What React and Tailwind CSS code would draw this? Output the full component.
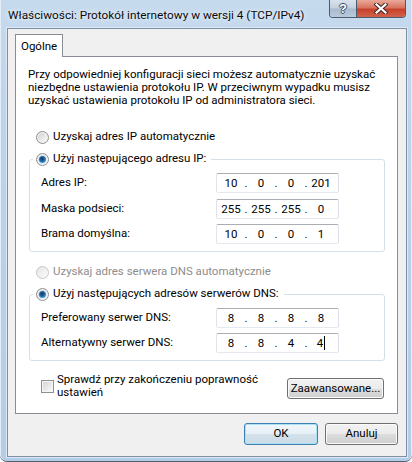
import React, { Fragment } from "react";

function Radio({ checked, disabled }) {
  if (disabled) {
    return (
      <span className="inline-flex h-[13px] w-[13px] shrink-0 items-center justify-center rounded-full border border-[#c6c6c6] bg-[linear-gradient(135deg,#e6e6e6,#fbfbfb)]" />
    );
  }
  return (
    <span className="inline-flex h-[13px] w-[13px] shrink-0 items-center justify-center rounded-full border border-[#8f8f8f] bg-[linear-gradient(135deg,#cfcfcf,#fdfdfd)] shadow-[inset_0_0_0_1px_#f4f4f4]">
      {checked && (
        <span className="h-[7px] w-[7px] rounded-full bg-[radial-gradient(circle_at_45%_40%,#0e3a66_0%,#1b5c9a_35%,#3d9ad8_70%,#a4dcf7_100%)]" />
      )}
    </span>
  );
}

function IPBox({ parts, cursor }) {
  return (
    <div className="flex h-[20px] w-[123px] items-center rounded-[2px] border border-[#e3e9ef] border-t-[#abadb3] border-l-[#e2e3ea] border-r-[#dbdfe6] bg-white pl-[2px] leading-[18px] text-black">
      {parts.map((p, i) => (
        <Fragment key={i}>
          {i > 0 && <span className="w-[6px] text-center">.</span>}
          <span className="flex w-[24px] items-center justify-center">
            {p}
            {cursor && i === parts.length - 1 && (
              <span className="ml-[1px] h-[14px] w-[1px] bg-black" />
            )}
          </span>
        </Fragment>
      ))}
    </div>
  );
}

function Field({ label, parts, cursor }) {
  return (
    <div className="flex items-center">
      <span className="w-[186px] pl-[11px]">{label}</span>
      <IPBox parts={parts} cursor={cursor} />
    </div>
  );
}

function WinButton({ children, className = "", primary }) {
  return (
    <div
      className={
        "flex items-center justify-center rounded-[3px] border leading-none " +
        (primary
          ? "border-[#3c7fb1] bg-[linear-gradient(#f2f8fc,#e5eff6_50%,#d3e1eb_50%,#cbdbe6)] shadow-[inset_0_0_0_1px_#aee0f8] "
          : "border-[#707070] bg-[linear-gradient(#f2f2f2,#ebebeb_50%,#dddddd_50%,#cfcfcf)] shadow-[inset_0_0_0_1px_#fbfbfb] ") +
        className
      }
    >
      {children}
    </div>
  );
}

function GroupHeader({ children }) {
  return (
    <div className="-mt-[9px] ml-[3px] flex h-[16px] w-fit items-center gap-[4px] bg-white pl-[3px] pr-[5px]">
      <Radio checked />
      <span>{children}</span>
    </div>
  );
}

export default function App() {
  return (
    <div className="flex h-[462px] w-[412px] flex-col overflow-hidden rounded-b-[7px] border-b border-[#51606f] bg-[linear-gradient(180deg,#c6daee,#bdd3ea_30%,#b4cde7_100%)] pb-[4px] pl-[7px] pr-[5px] font-['Roboto',sans-serif] text-[11.5px] text-black shadow-[inset_1px_0_#e4edf7,inset_-1px_0_#e4edf7]">
      {/* Title bar */}
      <div className="flex h-[28px] shrink-0 items-start justify-between">
        <div className="ml-[1px] mt-[6px] h-[18px] whitespace-nowrap text-[11.8px] leading-[18px] text-[#0b0b0b] [text-shadow:0_0_6px_#eaf2fb,0_0_3px_#eaf2fb]">
          Właściwości: Protokół internetowy w wersji 4 (TCP/IPv4)
        </div>
        <div className="mr-[1px] flex h-[18px] overflow-hidden rounded-b-[4px] border border-t-0 border-[#4b5a6c] shadow-[inset_0_0_0_1px_rgba(255,255,255,0.5)]">
          <div className="flex w-[27px] items-center justify-center border-r border-[#4b5a6c] bg-[linear-gradient(#d9e3ee,#c3d1e0_45%,#a9bbcf_55%,#b9cadb)] font-['Liberation_Sans',sans-serif] text-[13px] font-bold leading-none text-white [text-shadow:1px_0_#3d4a5a,-1px_0_#3d4a5a,0_1px_#3d4a5a,0_-1px_#3d4a5a]">
            ?
          </div>
          <div className="flex w-[48px] items-center justify-center bg-[linear-gradient(#e9a99b,#d9735f_45%,#c6412b_55%,#d4614a)]">
            <svg width="14" height="11" viewBox="0 0 14 11">
              <path d="M2.5 1.5 L11.5 9.5 M11.5 1.5 L2.5 9.5" stroke="#3e2a27" strokeWidth="4.2" strokeLinecap="square" />
              <path d="M2.5 1.5 L11.5 9.5 M11.5 1.5 L2.5 9.5" stroke="#ffffff" strokeWidth="2.2" strokeLinecap="square" />
            </svg>
          </div>
        </div>
      </div>

      {/* Client area */}
      <div className="flex min-h-0 flex-1 flex-col border border-[#7d8fa4] bg-[#f0f0f0] px-[7px] pt-[5px] shadow-[0_0_0_1px_#dde8f4]">
        {/* Tab header */}
        <div className="relative z-10 -mb-[1px] flex h-[23px] w-[48px] items-start border border-b-0 border-[#898c95] bg-white pl-[5px] pt-[1px] leading-[20px]">
          Ogólne
        </div>
        {/* Tab page */}
        <div className="flex h-[358px] w-[383px] flex-col border border-[#898c95] bg-white">
          <p className="whitespace-nowrap pl-[12px] pt-[11px] leading-[13px]">
            Przy odpowiedniej konfiguracji sieci możesz automatycznie uzyskać
            <br />
            niezbędne ustawienia protokołu IP. W przeciwnym wypadku musisz
            <br />
            uzyskać ustawienia protokołu IP od administratora sieci.
          </p>

          <div className="ml-[20px] mt-[22px] flex h-[16px] items-center gap-[4px]">
            <Radio />
            <span>Uzyskaj adres IP automatycznie</span>
          </div>

          <div className="ml-[13px] mt-[14px] flex w-[356px] flex-col rounded-[3px] border border-[#d5dfe5] pb-[7px]">
            <GroupHeader>Użyj następującego adresu IP:</GroupHeader>
            <div className="mt-[6px] flex flex-col gap-[5.5px]">
              <Field label="Adres IP:" parts={["10", "0", "0", "201"]} />
              <Field label="Maska podsieci:" parts={["255", "255", "255", "0"]} />
              <Field label="Brama domyślna:" parts={["10", "0", "0", "1"]} />
            </div>
          </div>

          <div className="ml-[20px] mt-[12px] flex h-[16px] items-center gap-[4px] text-[#8d8d8d]">
            <Radio disabled />
            <span>Uzyskaj adres serwera DNS automatycznie</span>
          </div>

          <div className="ml-[13px] mt-[14px] flex w-[356px] flex-col rounded-[3px] border border-[#d5dfe5] pb-[7px]">
            <GroupHeader>Użyj następujących adresów serwerów DNS:</GroupHeader>
            <div className="mt-[6px] flex flex-col gap-[5px]">
              <Field label="Preferowany serwer DNS:" parts={["8", "8", "8", "8"]} />
              <Field label="Alternatywny serwer DNS:" parts={["8", "8", "4", "4"]} cursor />
            </div>
          </div>

          <div className="mt-[12px] flex items-start justify-between pl-[25px] pr-[13px]">
            <div className="flex items-center gap-[3px]">
              <span className="h-[13px] w-[13px] shrink-0 border border-[#8f8f8f] bg-[linear-gradient(135deg,#d2d2d2,#fcfcfc)] shadow-[inset_0_0_0_1px_#f6f6f6]" />
              <span className="leading-[13px]">
                Sprawdź przy zakończeniu poprawność
                <br />
                ustawień
              </span>
            </div>
            <WinButton className="mt-[5px] h-[21px] w-[97px]">Zaawansowane...</WinButton>
          </div>
        </div>

        {/* Dialog buttons */}
        <div className="mt-[9px] flex justify-end gap-[7px] pr-[1px]">
          <WinButton primary className="h-[22px] w-[74px]">
            OK
          </WinButton>
          <WinButton className="h-[22px] w-[73px]">Anuluj</WinButton>
        </div>
      </div>
    </div>
  );
}
